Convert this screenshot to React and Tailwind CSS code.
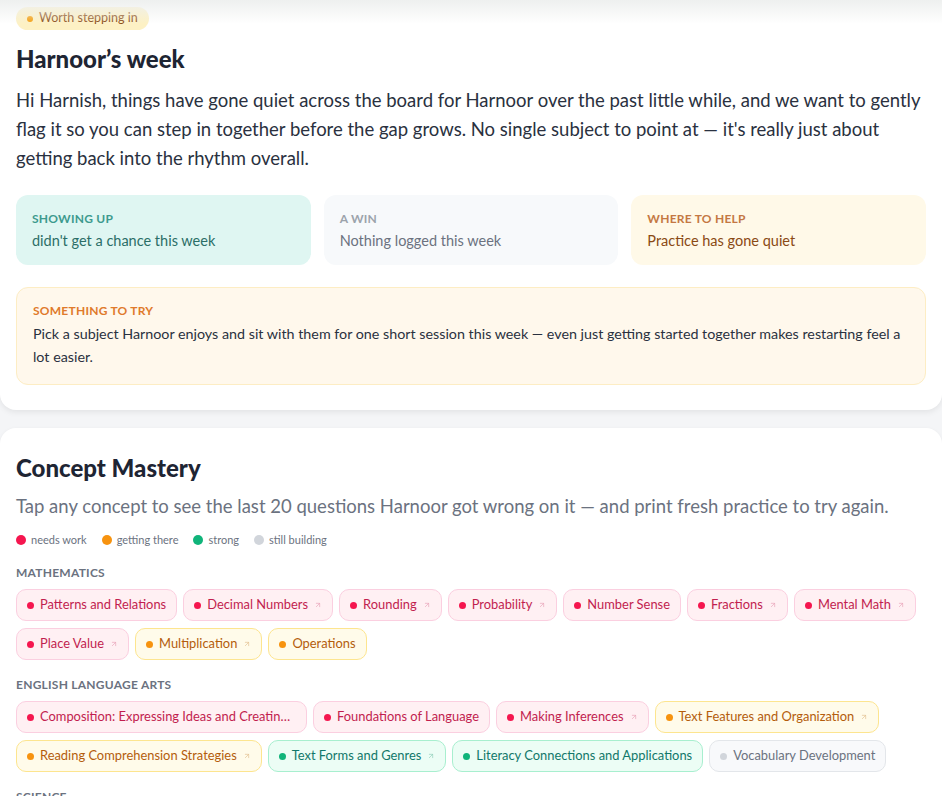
import React from "react";
import { ArrowUpRight } from "lucide-react";

const body = { fontFamily: "Lato, 'Noto Sans', sans-serif" };
const display = { fontFamily: "Lato, 'Noto Sans', sans-serif" };

// tone styles for concept chips
const tones = {
  red: {
    chip: "bg-[#fff0f3] border-[#fbcfe0] text-[#c21e4f]",
    dot: "bg-[#f5164f]",
    arrow: "text-[#e8a3b8]",
  },
  orange: {
    chip: "bg-[#fffbea] border-[#fde58f] text-[#b45d0c]",
    dot: "bg-[#f7930f]",
    arrow: "text-[#e3c08f]",
  },
  green: {
    chip: "bg-[#ecfdf5] border-[#a8efcf] text-[#11786a]",
    dot: "bg-[#10b47a]",
    arrow: "text-[#8fcfba]",
  },
  gray: {
    chip: "bg-[#f8f9fb] border-[#e3e6ea] text-[#6b7280]",
    dot: "bg-[#d1d5db]",
    arrow: "text-[#c4c8ce]",
  },
};

const subjects = [
  {
    name: "Mathematics",
    concepts: [
      { label: "Patterns and Relations", tone: "red" },
      { label: "Decimal Numbers", tone: "red", link: true },
      { label: "Rounding", tone: "red", link: true },
      { label: "Probability", tone: "red", link: true },
      { label: "Number Sense", tone: "red" },
      { label: "Fractions", tone: "red", link: true },
      { label: "Mental Math", tone: "red", link: true },
      { label: "Place Value", tone: "red", link: true },
      { label: "Multiplication", tone: "orange", link: true },
      { label: "Operations", tone: "orange" },
    ],
  },
  {
    name: "English Language Arts",
    concepts: [
      { label: "Composition: Expressing Ideas and Creating Texts", tone: "red", clip: true },
      { label: "Foundations of Language", tone: "red" },
      { label: "Making Inferences", tone: "red", link: true },
      { label: "Text Features and Organization", tone: "orange", link: true },
      { label: "Reading Comprehension Strategies", tone: "orange", link: true },
      { label: "Text Forms and Genres", tone: "green", link: true },
      { label: "Literacy Connections and Applications", tone: "green" },
      { label: "Vocabulary Development", tone: "gray" },
    ],
  },
  { name: "Science", concepts: [] },
];

function Chip({ label, tone, link, clip }) {
  const t = tones[tone];
  return (
    <button
      className={`flex h-8 items-center gap-1.5 rounded-[10px] border px-[10px] text-[12.9px] ${t.chip}`}
    >
      <span className={`h-[7px] w-[7px] shrink-0 rounded-full ${t.dot}`}></span>
      <span className={clip ? "max-w-[256px] truncate" : "whitespace-nowrap"}>{label}</span>
      {link && <ArrowUpRight size={8} strokeWidth={2} className={t.arrow} />}
    </button>
  );
}

function StatCard({ label, value, box, labelColor, valueColor }) {
  return (
    <div className={`h-[70px] rounded-xl px-4 pt-[16px] ${box}`}>
      <div className={`text-[12px] font-bold uppercase leading-4 tracking-[0.02em] ${labelColor}`}>
        {label}
      </div>
      <div className={`mt-1 text-[14.5px] leading-5 ${valueColor}`}>{value}</div>
    </div>
  );
}

export default function App() {
  return (
    <div className="relative min-h-[796px] overflow-hidden bg-[#f4f5f7] pb-10" style={body}>
      {/* top fade from the sticky header */}
      <div className="pointer-events-none absolute inset-x-0 top-0 z-10 h-6 bg-gradient-to-b from-[#eef0ef] to-transparent"></div>

      {/* weekly summary card */}
      <section className="rounded-b-2xl bg-white px-4 pt-[7px] pb-[25px] shadow-[0_2px_6px_rgba(0,0,0,0.08)]">
        <span className="flex h-[23px] w-fit items-center gap-1.5 rounded-full bg-[#fdf1c4] px-[11px] text-[12.5px] text-[#8a4a12]">
          <span className="h-[6px] w-[6px] rounded-full bg-[#f59e0b]"></span>
          Worth stepping in
        </span>
        <h1 className="mt-[15px] text-[24px] font-black leading-7 text-[#1e2533]" style={display}>
          Harnoor’s week
        </h1>
        <p className="mt-[13px] text-[18.5px] leading-[29px] text-[#2a3140]">
          Hi Harnish, things have gone quiet across the board for Harnoor over the past little while, and we want to gently flag it so you can step in together before the gap grows. No single subject to point at — it's really just about getting back into the rhythm overall.
        </p>

        <div className="mt-[22px] grid grid-cols-3 gap-[13px]">
          <StatCard
            label="Showing up"
            value="didn't get a chance this week"
            box="bg-[#dff6f2]"
            labelColor="text-[#3d9a8e]"
            valueColor="text-[#2b6e67]"
          />
          <StatCard
            label="A win"
            value="Nothing logged this week"
            box="bg-[#f7f9fb]"
            labelColor="text-[#9ca3ab]"
            valueColor="text-[#6b7280]"
          />
          <StatCard
            label="Where to help"
            value="Practice has gone quiet"
            box="bg-[#fff9e8]"
            labelColor="text-[#c47843]"
            valueColor="text-[#8a4a14]"
          />
        </div>

        <div className="mt-[22px] rounded-xl border border-[#fdedc4] bg-[#fff8ec] px-4 pt-[15px] pb-[16px]">
          <div className="text-[12px] font-bold uppercase leading-4 tracking-[0.02em] text-[#e07a2b]">
            Something to try
          </div>
          <p className="mt-[3px] text-[14.3px] leading-[23px] text-[#2a3140]">
            Pick a subject Harnoor enjoys and sit with them for one short session this week — even just getting started together makes restarting feel a lot easier.
          </p>
        </div>
      </section>

      {/* concept mastery card */}
      <section className="mt-[18px] rounded-2xl bg-white px-4 pt-[26px] pb-8 shadow-[0_1px_4px_rgba(0,0,0,0.05)]">
        <h2 className="text-[24px] font-black leading-7 text-[#1e2533]" style={display}>
          Concept Mastery
        </h2>
        <p className="mt-[10px] text-[18.5px] leading-7 text-[#6b7280]">
          Tap any concept to see the last 20 questions Harnoor got wrong on it — and print fresh practice to try again.
        </p>

        <div className="mt-[12px] flex items-center gap-[15px] text-[11px] leading-4 text-[#6b7280]">
          <span className="flex items-center gap-[5px]">
            <span className="h-[10px] w-[10px] rounded-full bg-[#f5164f]"></span>needs work
          </span>
          <span className="flex items-center gap-[5px]">
            <span className="h-[10px] w-[10px] rounded-full bg-[#f7930f]"></span>getting there
          </span>
          <span className="flex items-center gap-[5px]">
            <span className="h-[10px] w-[10px] rounded-full bg-[#10b47a]"></span>strong
          </span>
          <span className="flex items-center gap-[5px]">
            <span className="h-[10px] w-[10px] rounded-full bg-[#d1d5db]"></span>still building
          </span>
        </div>

        <div className="mt-[17px] flex flex-col gap-[17px]">
          {subjects.map((s) => (
            <div key={s.name}>
              <div className="text-[12px] font-bold uppercase leading-4 tracking-[0.02em] text-[#6b7280]">
                {s.name}
              </div>
              {s.concepts.length > 0 && (
                <div className="mt-[8px] flex flex-wrap gap-x-1.5 gap-y-[7px]">
                  {s.concepts.map((c) => (
                    <Chip key={c.label} {...c} />
                  ))}
                </div>
              )}
            </div>
          ))}
        </div>
      </section>
    </div>
  );
}
